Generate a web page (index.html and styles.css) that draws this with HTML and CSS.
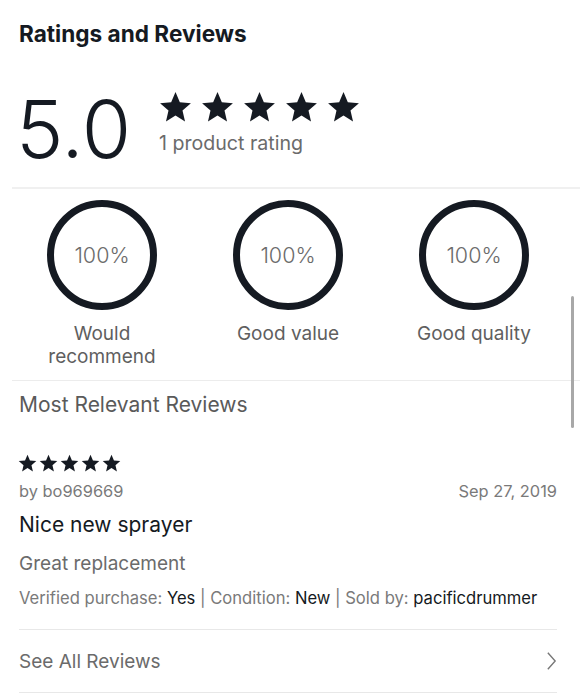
FILE: index.html
```html
<!DOCTYPE html>
<html lang="en">
<head>
  <meta charset="UTF-8">
  <title>Ratings and Reviews</title>
  <link rel="stylesheet" href="styles.css">
</head>
<body>

  <div class="scrollbar"></div>

  <!-- Summary -->
  <section class="summary">
    <h1>Ratings and Reviews</h1>
    <div class="score">
      <div class="score-value">5.0</div>
      <div class="score-side">
        <div class="stars stars-big">
          <svg viewBox="0 0 24 24"><path d="M12 17.27L18.18 21l-1.64-7.03L22 9.24l-7.19-.61L12 2 9.19 8.63 2 9.24l5.46 4.73L5.82 21z"/></svg>
          <svg viewBox="0 0 24 24"><path d="M12 17.27L18.18 21l-1.64-7.03L22 9.24l-7.19-.61L12 2 9.19 8.63 2 9.24l5.46 4.73L5.82 21z"/></svg>
          <svg viewBox="0 0 24 24"><path d="M12 17.27L18.18 21l-1.64-7.03L22 9.24l-7.19-.61L12 2 9.19 8.63 2 9.24l5.46 4.73L5.82 21z"/></svg>
          <svg viewBox="0 0 24 24"><path d="M12 17.27L18.18 21l-1.64-7.03L22 9.24l-7.19-.61L12 2 9.19 8.63 2 9.24l5.46 4.73L5.82 21z"/></svg>
          <svg viewBox="0 0 24 24"><path d="M12 17.27L18.18 21l-1.64-7.03L22 9.24l-7.19-.61L12 2 9.19 8.63 2 9.24l5.46 4.73L5.82 21z"/></svg>
        </div>
        <div class="score-count">1 product rating</div>
      </div>
    </div>
  </section>

  <!-- Aspect circles -->
  <section class="aspects">
    <div class="aspect">
      <div class="ring">100%</div>
      <div class="aspect-label">Would<br>recommend</div>
    </div>
    <div class="aspect">
      <div class="ring">100%</div>
      <div class="aspect-label">Good value</div>
    </div>
    <div class="aspect">
      <div class="ring">100%</div>
      <div class="aspect-label">Good quality</div>
    </div>
  </section>

  <!-- Reviews -->
  <section class="reviews">
    <h2>Most Relevant Reviews</h2>

    <div class="review">
      <div class="stars stars-small">
        <svg viewBox="0 0 24 24"><path d="M12 17.27L18.18 21l-1.64-7.03L22 9.24l-7.19-.61L12 2 9.19 8.63 2 9.24l5.46 4.73L5.82 21z"/></svg>
        <svg viewBox="0 0 24 24"><path d="M12 17.27L18.18 21l-1.64-7.03L22 9.24l-7.19-.61L12 2 9.19 8.63 2 9.24l5.46 4.73L5.82 21z"/></svg>
        <svg viewBox="0 0 24 24"><path d="M12 17.27L18.18 21l-1.64-7.03L22 9.24l-7.19-.61L12 2 9.19 8.63 2 9.24l5.46 4.73L5.82 21z"/></svg>
        <svg viewBox="0 0 24 24"><path d="M12 17.27L18.18 21l-1.64-7.03L22 9.24l-7.19-.61L12 2 9.19 8.63 2 9.24l5.46 4.73L5.82 21z"/></svg>
        <svg viewBox="0 0 24 24"><path d="M12 17.27L18.18 21l-1.64-7.03L22 9.24l-7.19-.61L12 2 9.19 8.63 2 9.24l5.46 4.73L5.82 21z"/></svg>
      </div>
      <div class="review-meta">
        <span>by bo969669</span>
        <span>Sep 27, 2019</span>
      </div>
      <div class="review-title">Nice new sprayer</div>
      <div class="review-body">Great replacement</div>
      <div class="review-info">
        Verified purchase: <b>Yes</b> | Condition: <b>New</b> | Sold by: <b>pacificdrummer</b>
      </div>
    </div>

    <a class="see-all" href="#">
      <span>See All Reviews</span>
      <svg viewBox="0 0 12 20"><path d="M2 1l8 9-8 9"/></svg>
    </a>
  </section>

</body>
</html>
```

FILE: styles.css
```css
body {
  font-family: Inter, Roboto, "Liberation Sans", sans-serif;
  margin: 0;
  background: #fff;
  color: #151a22;
  position: relative;
}

.scrollbar {
  position: absolute;
  left: 571px;
  top: 296px;
  width: 3px;
  height: 132px;
  border-radius: 2px;
  background: #a8a8a8;
}

/* Summary */
.summary {
  padding: 20px 0 0 19px;
}
.summary h1 {
  margin: 0;
  font-size: 22.6px;
  font-weight: bold;
  line-height: 28px;
}
.score {
  display: flex;
  align-items: flex-start;
  margin: 41px 0 0 -7px;
  padding: 0 0 18px 7px;
  border-bottom: 2px solid #f0f0f0;
}
.score-value {
  width: 142px;
  margin-left: -3px;
  font-size: 80px;
  font-weight: 300;
  line-height: 80px;
}
.stars {
  display: flex;
}
.stars svg {
  fill: #151a22;
  flex: none;
}
.stars-big {
  margin-left: -1px;
}
.stars-big svg {
  width: 37px;
  height: 37px;
  margin-right: 5px;
}
.score-count {
  margin-top: 6px;
  margin-left: 1px;
  font-size: 19.6px;
  line-height: 22px;
  color: #6b6b6b;
}

/* Aspect circles */
.aspects {
  display: flex;
  gap: 6px;
  margin-left: 12px;
  padding: 11px 0 12px;
  border-bottom: 1px solid #ececec;
}
.aspect {
  width: 180px;
  display: flex;
  flex-direction: column;
  align-items: center;
}
.ring {
  width: 96px;
  height: 96px;
  border: 7px solid #151a22;
  border-radius: 50%;
  display: flex;
  align-items: center;
  justify-content: center;
  font-size: 21.5px;
  font-weight: 300;
  color: #6b6b6b;
}
.aspect-label {
  margin-top: 12px;
  font-size: 19px;
  line-height: 23px;
  color: #5f5f5f;
  text-align: center;
}

/* Reviews */
.reviews {
  padding: 0 23px 0 19px;
}
.reviews h2 {
  margin: 11px 0 0;
  font-size: 21px;
  line-height: 26px;
  font-weight: normal;
  color: #5a5a5a;
}
.review {
  padding: 35px 0 21px;
  border-bottom: 1px solid #e8e8e8;
}
.stars-small {
  margin-left: -2px;
}
.stars-small svg {
  width: 21px;
  height: 21px;
}
.review-meta {
  display: flex;
  justify-content: space-between;
  margin-top: 7px;
  font-size: 16.4px;
  line-height: 20px;
  color: #7a7a7a;
}
.review-title {
  margin-top: 11px;
  font-size: 21px;
  line-height: 26px;
  color: #151a22;
}
.review-body {
  margin-top: 14px;
  font-size: 19px;
  line-height: 23px;
  color: #6b6b6b;
}
.review-info {
  margin-top: 13px;
  font-size: 16.6px;
  line-height: 20px;
  color: #7a7a7a;
}
.review-info b {
  font-weight: normal;
  color: #151a22;
}
.see-all {
  display: flex;
  justify-content: space-between;
  align-items: center;
  height: 62px;
  border-bottom: 1px solid #e8e8e8;
  text-decoration: none;
  font-size: 19px;
  color: #6b6b6b;
}
.see-all svg {
  width: 11px;
  height: 20px;
  fill: none;
  stroke: #777;
  stroke-width: 1.5;
}
```
